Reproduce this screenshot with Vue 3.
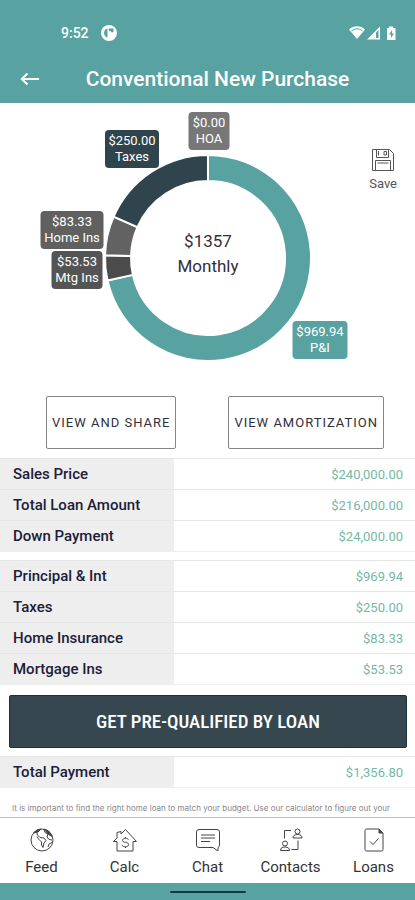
<template>
  <div class="app">
    <header class="header">
      <div class="status-bar">
        <span class="clock">9:52</span>
        <svg class="notif" viewBox="0 0 16 16" aria-hidden="true">
          <circle cx="8" cy="8" r="8" fill="#fff" />
          <path d="M6.500 3.500v9C4.500 12 3 10.300 3 8s1.500-4 3.500-4.500z" fill="#58a2a1" />
          <path d="M7.800 3.500h4.700v3.800H10V6H7.800z" fill="#58a2a1" />
        </svg>
        <svg class="signals" viewBox="0 0 48 16" aria-hidden="true">
          <path d="M0 4.500C4.500.300 11.500.300 16 4.500L8 14z" fill="#fff" />
          <path d="M2.500 6Q8 1.500 13.500 6" fill="none" stroke="#58a2a1" stroke-width="1" />
          <path d="M18 14.500L31 1.500v13z" fill="#fff" />
          <path d="M27 7.500l2.500-2.500v8H27z" fill="#58a2a1" />
          <path d="M38 3h2V1.500h4V3h2.500v12H38z" fill="#fff" />
          <path d="M43 5l-3 4.500h2V13l3-4.500h-2z" fill="#58a2a1" />
        </svg>
      </div>
      <div class="title-bar">
        <button class="back" aria-label="Back">
          <svg viewBox="0 0 20 14"><path d="M19 7H2M7.500 1.500L1.800 7l5.700 5.500" fill="none" stroke="#fff" stroke-width="2" /></svg>
        </button>
        <h1>Conventional New Purchase</h1>
      </div>
    </header>

    <main class="content">
      <section class="chart-area">
        <svg class="chart" viewBox="-208 -155 415 280" role="img" aria-label="Monthly payment breakdown">
          <path v-for="s in slices" :key="s.label" :d="s.path" :fill="s.color" stroke="#fff" stroke-width="2" />
          <g v-for="s in slices" :key="s.label + '-tag'">
            <rect :x="s.x - s.w / 2" :y="s.y - 19" :width="s.w" height="38" rx="4" :fill="s.tag" />
            <text class="tag" :x="s.x" :y="s.y - 4">{{ s.amount }}</text>
            <text class="tag" :x="s.x" :y="s.y + 12">{{ s.label }}</text>
          </g>
          <text class="total" x="0" y="-11">$1357</text>
          <text class="total" x="0" y="14">Monthly</text>
        </svg>
        <button class="save">
          <svg viewBox="0 0 24 24" fill="none" stroke="#555" stroke-width="1">
            <path d="M1.500 1.500h17l4 4v17h-21zM5.500 1.500v8h12v-8M4.500 22.500v-10h15v10M6.500 15h11" />
            <path d="M13 3.500h2.500V7H13zM7.500 3v4.500" />
          </svg>
          <span>Save</span>
        </button>
      </section>

      <div class="actions">
        <button class="outline">VIEW AND SHARE</button>
        <button class="outline">VIEW AMORTIZATION</button>
      </div>

      <table class="rows">
        <tbody>
          <tr v-for="r in loanRows" :key="r.name">
            <th scope="row">{{ r.name }}</th>
            <td>{{ r.value }}</td>
          </tr>
        </tbody>
      </table>

      <table class="rows">
        <tbody>
          <tr v-for="r in paymentRows" :key="r.name">
            <th scope="row">{{ r.name }}</th>
            <td>{{ r.value }}</td>
          </tr>
        </tbody>
      </table>

      <button class="prequalify">GET PRE-QUALIFIED BY LOAN</button>

      <table class="rows">
        <tbody>
          <tr>
            <th scope="row">Total Payment</th>
            <td>$1,356.80</td>
          </tr>
        </tbody>
      </table>

      <p class="note">
        It is important to find the right home loan to match your budget. Use our calculator to figure out your
      </p>
    </main>

    <nav class="tabs">
      <a href="#feed">
        <svg viewBox="0 0 24 24">
          <circle cx="12" cy="12" r="11" />
          <path d="M6.500 3.500l1 3.500 2.500 2.500 4 .5 2 2.500-2 2.500-1 4.500-1.500-2.500V14L9 11.500 7 8.500M14 1.500l1 3 3 1.500-1 3 2 2.500 3 .5M18 19l1-3 3-1.500" />
          <path d="M14 1l5 2.500 3 5-3.500-2zM3.500 5l3.500-3 4-1-3 3z" fill="#444" />
        </svg>
        <span>Feed</span>
      </a>
      <a href="#calc">
        <svg viewBox="0 0 24 24">
          <path d="M4 13.500v9.500h16v-9.500h3.500L12.500 1.500 8 6V3.500L4 4.500V10L.500 13.500H4" />
          <path d="M15.500 11.800c-.5-1-1.500-1.500-3-1.500-4 0-4 4 0 4s4 4.500 0 4.500c-1.700 0-3-.600-3.500-1.900M12.500 9v1.300M12.500 18.800V20" />
        </svg>
        <span>Calc</span>
      </a>
      <a href="#chat">
        <svg viewBox="0 0 24 24">
          <path d="M3 1.500h18q2.500 0 2.500 2.500v13q0 2-1.500 2.500v3.500l-5-3.500H3q-2.500 0-2.500-2.500V4q0-2.500 2.500-2.500z" />
          <path d="M5 7h14M5 10h14M5 13.500h9" />
        </svg>
        <span>Chat</span>
      </a>
      <a href="#contacts">
        <svg viewBox="0 0 24 24">
          <path d="M12 2.500H5.500v8M12.500 21.500h6.500v-9" />
          <circle cx="18.500" cy="3.500" r="2.500" />
          <path d="M14 10q0-3.500 4.500-3.500T23 10zM1.500 22.500q0-3.500 4.500-3.500t4.500 3.500z" />
          <circle cx="6" cy="15.500" r="2.500" />
        </svg>
        <span>Contacts</span>
      </a>
      <a href="#loans">
        <svg viewBox="0 0 24 24">
          <path d="M4.500 1h12.500l4 4v16.500q0 1.500-1.500 1.500h-15q-1.500 0-1.500-1.500v-19q0-1.500 1.500-1.500z" />
          <path d="M17 1v4h4z" fill="#444" />
          <path d="M8 13.500l3 3 5.500-6" />
        </svg>
        <span>Loans</span>
      </a>
    </nav>
    <div class="gesture-bar"><span></span></div>
  </div>
</template>

<script setup>
const OUTER = 103
const INNER = 77

// x / y: centre of the tag, measured from the middle of the ring
const parts = [
  { label: 'P&I', value: 969.94, color: '#58a2a1', tag: '#58a2a1', x: 112, y: 82, w: 55 },
  { label: 'Mtg Ins', value: 53.53, color: '#4b4b4b', tag: '#545454', x: -131, y: 12, w: 51 },
  { label: 'Home Ins', value: 83.33, color: '#626262', tag: '#606060', x: -136, y: -28, w: 63 },
  { label: 'Taxes', value: 250, color: '#30444e', tag: '#30444e', x: -76, y: -109, w: 54 },
  { label: 'HOA', value: 0, color: '#777', tag: '#777', x: 1, y: -127, w: 41 }
]

const sum = parts.reduce((t, p) => t + p.value, 0)

function point(r, a) {
  return `${(r * Math.sin(a)).toFixed(2)} ${(-r * Math.cos(a)).toFixed(2)}`
}

let angle = 0
const slices = parts.map((p) => {
  const from = angle
  const to = from + (p.value / sum) * Math.PI * 2
  angle = to
  const large = to - from > Math.PI ? 1 : 0
  return {
    ...p,
    amount: '$' + p.value.toFixed(2),
    path: `M${point(OUTER, from)}A${OUTER} ${OUTER} 0 ${large} 1 ${point(OUTER, to)}L${point(INNER, to)}A${INNER} ${INNER} 0 ${large} 0 ${point(INNER, from)}Z`
  }
})

const loanRows = [
  { name: 'Sales Price', value: '$240,000.00' },
  { name: 'Total Loan Amount', value: '$216,000.00' },
  { name: 'Down Payment', value: '$24,000.00' }
]

const paymentRows = [
  { name: 'Principal & Int', value: '$969.94' },
  { name: 'Taxes', value: '$250.00' },
  { name: 'Home Insurance', value: '$83.33' },
  { name: 'Mortgage Ins', value: '$53.53' }
]
</script>

<style>
body {
  margin: 0;
  background: #fff;
}
</style>

<style scoped>
.app {
  display: flex;
  flex-direction: column;
  height: 100vh;
  font-family: Roboto, 'Liberation Sans', sans-serif;
  color: #1c2038;
}

button {
  font-family: inherit;
  cursor: pointer;
}

.header {
  background: #58a2a1;
  color: #fff;
  flex-shrink: 0;
}

.status-bar {
  display: flex;
  align-items: center;
  padding: 24px 18px 0 61px;
  height: 18px;
}

.clock {
  font-size: 14px;
  font-weight: 500;
}

.notif {
  width: 16px;
  height: 16px;
  margin-left: 12px;
}

.signals {
  width: 48px;
  height: 16px;
  margin-left: auto;
}

.title-bar {
  display: flex;
  align-items: center;
  padding: 13px 20px 0;
  height: 48px;
}

.back {
  display: flex;
  border: 0;
  padding: 0;
  background: none;
}

.back svg {
  width: 20px;
  height: 14px;
}

h1 {
  flex: 1;
  margin: 0;
  text-align: center;
  font-size: 21px;
  font-weight: 500;
}

.content {
  flex: 1;
  min-height: 0;
  overflow: hidden;
}

.chart-area {
  position: relative;
}

.chart {
  display: block;
  width: 100%;
  height: 280px;
}

.tag {
  fill: #fff;
  font-size: 13px;
  text-anchor: middle;
}

.total {
  fill: #30303c;
  font-size: 17px;
  text-anchor: middle;
}

.save {
  position: absolute;
  top: 45px;
  right: 18px;
  display: flex;
  flex-direction: column;
  align-items: center;
  gap: 4px;
  padding: 0;
  border: 0;
  background: none;
  color: #555;
  font-size: 13px;
}

.save svg {
  width: 24px;
  height: 24px;
}

.actions {
  display: flex;
  justify-content: space-between;
  padding: 13px 31px 9px 46px;
}

.outline {
  height: 53px;
  padding: 0 5px;
  border: 1px solid #858585;
  border-radius: 2px;
  background: #fff;
  color: #30303c;
  font-size: 13px;
  letter-spacing: 1px;
}

.rows {
  width: 100%;
  margin-bottom: 8px;
  border-collapse: collapse;
  table-layout: fixed;
}

.rows th,
.rows td {
  box-sizing: border-box;
  height: 31px;
  padding: 0 12px;
  border-top: 1px solid #e6e6e6;
}

.rows tr:last-child th,
.rows tr:last-child td {
  border-bottom: 1px solid #eee;
}

.rows th {
  width: 42%;
  padding-left: 13px;
  background: #eee;
  text-align: left;
  font-size: 15px;
  font-weight: 500;
}

.rows td {
  text-align: right;
  color: #74b8a6;
  font-size: 13px;
}

.prequalify {
  display: block;
  width: calc(100% - 17px);
  height: 53px;
  margin: 10px 8px 8px 9px;
  border: 1px solid #17303a;
  border-radius: 2px;
  background: #36474f;
  color: #fff;
  font-family: 'Roboto Condensed', 'Open Sans Condensed', 'Noto Sans CJK SC', sans-serif;
  font-size: 19px;
  font-weight: 500;
}

.note {
  margin: 0;
  padding: 6px 12px 0;
  color: #888;
  font-family: Inter, Roboto, sans-serif;
  font-size: 8px;
  line-height: 12px;
}

.tabs {
  display: grid;
  grid-template-columns: repeat(5, 1fr);
  flex-shrink: 0;
  border-top: 1px solid #bbb;
  background: #fff;
}

.tabs a {
  display: flex;
  flex-direction: column;
  align-items: center;
  gap: 6px;
  padding: 10px 0 7px;
  color: #333;
  font-size: 15px;
  line-height: 18px;
  text-decoration: none;
}

.tabs svg {
  width: 24px;
  height: 24px;
  fill: none;
  stroke: #444;
  stroke-width: 1;
}

.gesture-bar {
  display: flex;
  justify-content: center;
  align-items: center;
  height: 17px;
  flex-shrink: 0;
  background: #58a2a1;
}

.gesture-bar span {
  width: 76px;
  height: 2px;
  border-radius: 1px;
  background: #163a3c;
}
</style>
